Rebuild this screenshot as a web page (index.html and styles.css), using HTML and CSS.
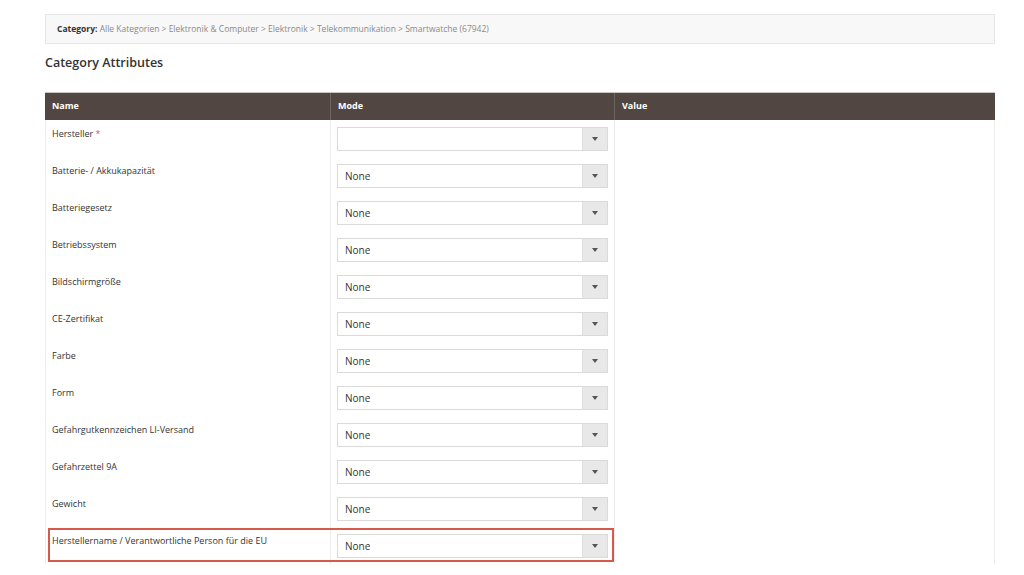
FILE: index.html
```html
<!DOCTYPE html>
<html lang="de">
<head>
<meta charset="utf-8">
<title>Category Attributes</title>
<link rel="stylesheet" href="styles.css">
</head>
<body>
<div class="page">
  <div class="crumbs"><span class="crumbs-label">Category:</span> Alle Kategorien &gt; Elektronik &amp; Computer &gt; Elektronik &gt; Telekommunikation &gt; Smartwatche (67942)</div>
  <h2 class="title">Category Attributes</h2>
  <div class="table">
    <div class="row head">
      <div class="cell">Name</div>
      <div class="cell">Mode</div>
      <div class="cell">Value</div>
    </div>
    <div class="row">
      <div class="cell name">Hersteller <span class="req">*</span></div>
      <div class="cell mode"><div class="select"><span class="val"></span><span class="arrow"></span></div></div>
      <div class="cell"></div>
    </div>
    <div class="row">
      <div class="cell name">Batterie- / Akkukapazität</div>
      <div class="cell mode"><div class="select"><span class="val">None</span><span class="arrow"></span></div></div>
      <div class="cell"></div>
    </div>
    <div class="row">
      <div class="cell name">Batteriegesetz</div>
      <div class="cell mode"><div class="select"><span class="val">None</span><span class="arrow"></span></div></div>
      <div class="cell"></div>
    </div>
    <div class="row">
      <div class="cell name">Betriebssystem</div>
      <div class="cell mode"><div class="select"><span class="val">None</span><span class="arrow"></span></div></div>
      <div class="cell"></div>
    </div>
    <div class="row">
      <div class="cell name">Bildschirmgröße</div>
      <div class="cell mode"><div class="select"><span class="val">None</span><span class="arrow"></span></div></div>
      <div class="cell"></div>
    </div>
    <div class="row">
      <div class="cell name">CE-Zertifikat</div>
      <div class="cell mode"><div class="select"><span class="val">None</span><span class="arrow"></span></div></div>
      <div class="cell"></div>
    </div>
    <div class="row">
      <div class="cell name">Farbe</div>
      <div class="cell mode"><div class="select"><span class="val">None</span><span class="arrow"></span></div></div>
      <div class="cell"></div>
    </div>
    <div class="row">
      <div class="cell name">Form</div>
      <div class="cell mode"><div class="select"><span class="val">None</span><span class="arrow"></span></div></div>
      <div class="cell"></div>
    </div>
    <div class="row">
      <div class="cell name">Gefahrgutkennzeichen LI-Versand</div>
      <div class="cell mode"><div class="select"><span class="val">None</span><span class="arrow"></span></div></div>
      <div class="cell"></div>
    </div>
    <div class="row">
      <div class="cell name">Gefahrzettel 9A</div>
      <div class="cell mode"><div class="select"><span class="val">None</span><span class="arrow"></span></div></div>
      <div class="cell"></div>
    </div>
    <div class="row">
      <div class="cell name">Gewicht</div>
      <div class="cell mode"><div class="select"><span class="val">None</span><span class="arrow"></span></div></div>
      <div class="cell"></div>
    </div>
    <div class="row highlight">
      <div class="cell name">Herstellername / Verantwortliche Person für die EU</div>
      <div class="cell mode"><div class="select"><span class="val">None</span><span class="arrow"></span></div></div>
      <div class="cell"></div>
    </div>
  </div>
</div>
</body>
</html>
```
FILE: styles.css
```css
html, body {
  margin: 0;
  padding: 0;
  background: #ffffff;
}
body {
  font-family: "Open Sans", "Liberation Sans", sans-serif;
  color: #333333;
  overflow: hidden;
}
.page {
  width: 950px;
  padding: 14px 0 0 45px;
}
.crumbs {
  box-sizing: border-box;
  height: 30px;
  background: #f8f8f8;
  border: 1px solid #e6e6e6;
  padding: 0 11px;
  font-size: 8.5px;
  line-height: 28px;
  color: #8a8a8a;
}
.crumbs-label {
  font-weight: 700;
  color: #333333;
}
.title {
  margin: 11px 0 0;
  font-size: 12.5px;
  font-weight: 600;
  line-height: 16px;
  color: #333333;
  height: 37px;
}
.table {
  border-left: 1px solid #ececec;
  border-right: 1px solid #ececec;
  box-sizing: border-box;
}
.row {
  display: grid;
  grid-template-columns: 284px 284px 1fr;
  height: 37px;
  position: relative;
}
.row .cell + .cell {
  border-left: 1px solid #ececec;
}
.head {
  height: 28px;
  background: #514641;
  border-top: 1px solid #c9c5c2;
  box-sizing: border-box;
  margin: 0 -1px;
  grid-template-columns: 285px 284px 1fr;
}
.head .cell {
  color: #ffffff;
  font-size: 9px;
  font-weight: 700;
  line-height: 26px;
  padding-left: 7px;
}
.head .cell + .cell {
  border-left: 1px solid #6e645f;
}
.name {
  font-size: 9px;
  line-height: 12px;
  padding: 8px 6px 0;
  color: #333333;
}
.req {
  color: #e0592a;
}
.mode {
  padding: 7px 0 0 6px;
}
.select {
  box-sizing: border-box;
  width: 271px;
  height: 24px;
  border: 1px solid #dadada;
  display: flex;
  background: #ffffff;
}
.val {
  flex: 1;
  font-size: 10px;
  line-height: 22px;
  padding-left: 7px;
  color: #333333;
}
.arrow {
  width: 24px;
  background: #e8e8e8;
  border-left: 1px solid #e0e0e0;
  display: flex;
  align-items: center;
  justify-content: center;
}
.arrow::before {
  content: "";
  width: 0;
  height: 0;
  border-left: 3px solid transparent;
  border-right: 3px solid transparent;
  border-top: 4px solid #555555;
}
.highlight::after {
  content: "";
  position: absolute;
  left: 2px;
  top: 1px;
  width: 566px;
  height: 34px;
  border: 2px solid #d65a4a;
  box-sizing: border-box;
  pointer-events: none;
}
```
